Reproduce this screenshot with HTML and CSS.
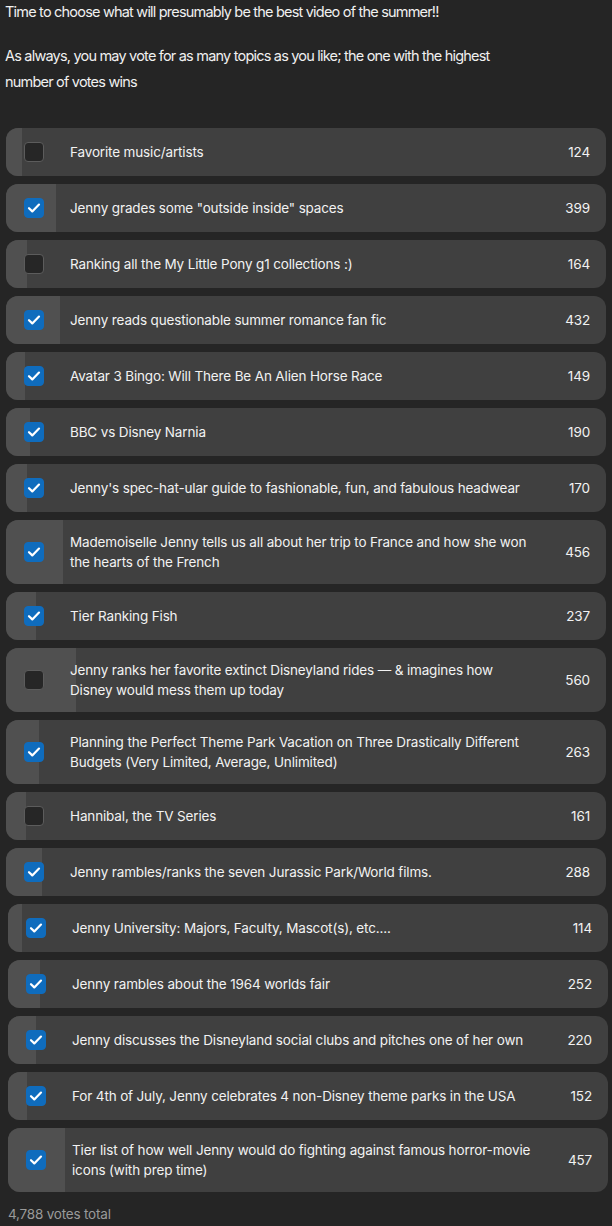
FILE: index.html
```html
<!DOCTYPE html>
<html>
<head>
<meta charset="utf-8">
<link rel="stylesheet" href="styles.css">
</head>
<body>
<div class="page">
  <div class="intro">
    <p>Time to choose what will presumably be the best video of the summer!!</p>
    <p>As always, you may vote for as many topics as you like; the one with the highest number of votes wins</p>
  </div>
  <div class="poll">
    <div class="row"><div class="fill" style="width:2.59%"></div><span class="box"></span><span class="label">Favorite music/artists</span><span class="count">124</span></div>
    <div class="row"><div class="fill" style="width:8.33%"></div><span class="box on"><svg viewBox="0 0 20 20"><path d="M5 10.2l3.3 3.2L15 6.6"/></svg></span><span class="label">Jenny grades some "outside inside" spaces</span><span class="count">399</span></div>
    <div class="row"><div class="fill" style="width:3.43%"></div><span class="box"></span><span class="label">Ranking all the My Little Pony g1 collections :)</span><span class="count">164</span></div>
    <div class="row"><div class="fill" style="width:9.02%"></div><span class="box on"><svg viewBox="0 0 20 20"><path d="M5 10.2l3.3 3.2L15 6.6"/></svg></span><span class="label">Jenny reads questionable summer romance fan fic</span><span class="count">432</span></div>
    <div class="row"><div class="fill" style="width:3.11%"></div><span class="box on"><svg viewBox="0 0 20 20"><path d="M5 10.2l3.3 3.2L15 6.6"/></svg></span><span class="label">Avatar 3 Bingo: Will There Be An Alien Horse Race</span><span class="count">149</span></div>
    <div class="row"><div class="fill" style="width:3.97%"></div><span class="box on"><svg viewBox="0 0 20 20"><path d="M5 10.2l3.3 3.2L15 6.6"/></svg></span><span class="label">BBC vs Disney Narnia</span><span class="count">190</span></div>
    <div class="row"><div class="fill" style="width:3.55%"></div><span class="box on"><svg viewBox="0 0 20 20"><path d="M5 10.2l3.3 3.2L15 6.6"/></svg></span><span class="label">Jenny's spec-hat-ular guide to fashionable, fun, and fabulous headwear</span><span class="count">170</span></div>
    <div class="row"><div class="fill" style="width:9.52%"></div><span class="box on"><svg viewBox="0 0 20 20"><path d="M5 10.2l3.3 3.2L15 6.6"/></svg></span><span class="label">Mademoiselle Jenny tells us all about her trip to France and how she won the hearts of the French</span><span class="count">456</span></div>
    <div class="row"><div class="fill" style="width:4.95%"></div><span class="box on"><svg viewBox="0 0 20 20"><path d="M5 10.2l3.3 3.2L15 6.6"/></svg></span><span class="label">Tier Ranking Fish</span><span class="count">237</span></div>
    <div class="row"><div class="fill" style="width:11.70%"></div><span class="box"></span><span class="label">Jenny ranks her favorite extinct Disneyland rides — &amp; imagines how Disney would mess them up today</span><span class="count">560</span></div>
    <div class="row"><div class="fill" style="width:5.49%"></div><span class="box on"><svg viewBox="0 0 20 20"><path d="M5 10.2l3.3 3.2L15 6.6"/></svg></span><span class="label">Planning the Perfect Theme Park Vacation on Three Drastically Different Budgets (Very Limited, Average, Unlimited)</span><span class="count">263</span></div>
    <div class="row"><div class="fill" style="width:3.36%"></div><span class="box"></span><span class="label">Hannibal, the TV Series</span><span class="count">161</span></div>
    <div class="row"><div class="fill" style="width:6.02%"></div><span class="box on"><svg viewBox="0 0 20 20"><path d="M5 10.2l3.3 3.2L15 6.6"/></svg></span><span class="label">Jenny rambles/ranks the seven Jurassic Park/World films.</span><span class="count">288</span></div>
    <div class="row shift"><div class="fill" style="width:2.38%"></div><span class="box on"><svg viewBox="0 0 20 20"><path d="M5 10.2l3.3 3.2L15 6.6"/></svg></span><span class="label">Jenny University: Majors, Faculty, Mascot(s), etc....</span><span class="count">114</span></div>
    <div class="row shift"><div class="fill" style="width:5.26%"></div><span class="box on"><svg viewBox="0 0 20 20"><path d="M5 10.2l3.3 3.2L15 6.6"/></svg></span><span class="label">Jenny rambles about the 1964 worlds fair</span><span class="count">252</span></div>
    <div class="row shift"><div class="fill" style="width:4.59%"></div><span class="box on"><svg viewBox="0 0 20 20"><path d="M5 10.2l3.3 3.2L15 6.6"/></svg></span><span class="label">Jenny discusses the Disneyland social clubs and pitches one of her own</span><span class="count">220</span></div>
    <div class="row shift"><div class="fill" style="width:3.17%"></div><span class="box on"><svg viewBox="0 0 20 20"><path d="M5 10.2l3.3 3.2L15 6.6"/></svg></span><span class="label">For 4th of July, Jenny celebrates 4 non-Disney theme parks in the USA</span><span class="count">152</span></div>
    <div class="row shift"><div class="fill" style="width:9.54%"></div><span class="box on"><svg viewBox="0 0 20 20"><path d="M5 10.2l3.3 3.2L15 6.6"/></svg></span><span class="label">Tier list of how well Jenny would do fighting against famous horror-movie icons (with prep time)</span><span class="count">457</span></div>
  </div>
  <div class="total">4,788 votes total</div>
</div>
</body>
</html>
```

FILE: styles.css
```css
html, body {
  margin: 0;
  padding: 0;
  background: #252525;
}
body {
  font-family: Inter, "Noto Sans", sans-serif;
  color: #ececec;
}
.page {
  padding: 0 6px 0 6px;
}
.intro {
  margin-left: -1px;
  font-size: 14.5px;
  letter-spacing: -0.8px;
  line-height: 26px;
  color: #f0f0f0;
  width: 500px;
}
.intro p {
  margin: 0 0 18px 0;
}
.intro p:first-child {
  margin-top: -1px;
}
.intro p:last-child {
  margin-bottom: 33px;
}
.poll {
  display: flex;
  flex-direction: column;
  gap: 8px;
}
.row {
  position: relative;
  display: flex;
  align-items: center;
  min-height: 48px;
  box-sizing: border-box;
  padding: 12px 16px 12px 18px;
  background: #404040;
  border-radius: 12px;
  overflow: hidden;
  width: 600px;
}
.row.shift {
  margin-left: 2px;
}
.fill {
  position: absolute;
  left: 0;
  top: 0;
  bottom: 0;
  background: #505050;
}
.box {
  position: relative;
  flex: none;
  width: 20px;
  height: 20px;
  box-sizing: border-box;
  border-radius: 4px;
  background: #262626;
  border: 1px solid #5c5c5c;
  margin-right: 26px;
}
.box.on {
  background: #0f6cbd;
  border-color: #0f6cbd;
}
.box svg {
  position: absolute;
  left: -1px;
  top: -1px;
  width: 20px;
  height: 20px;
  fill: none;
  stroke: #ffffff;
  stroke-width: 2.2;
  stroke-linecap: round;
  stroke-linejoin: round;
}
.label {
  position: relative;
  flex: 1;
  font-size: 13.5px;
  letter-spacing: -0.15px;
  line-height: 20px;
  color: #f2f2f2;
  padding-right: 34px;
}
.count {
  position: relative;
  flex: none;
  font-size: 13.5px;
  letter-spacing: -0.15px;
  line-height: 20px;
  color: #f2f2f2;
}
.total {
  margin-top: 12px;
  margin-left: 2px;
  font-size: 13.5px;
  letter-spacing: -0.2px;
  line-height: 20px;
  color: #9a9a9a;
}
```
